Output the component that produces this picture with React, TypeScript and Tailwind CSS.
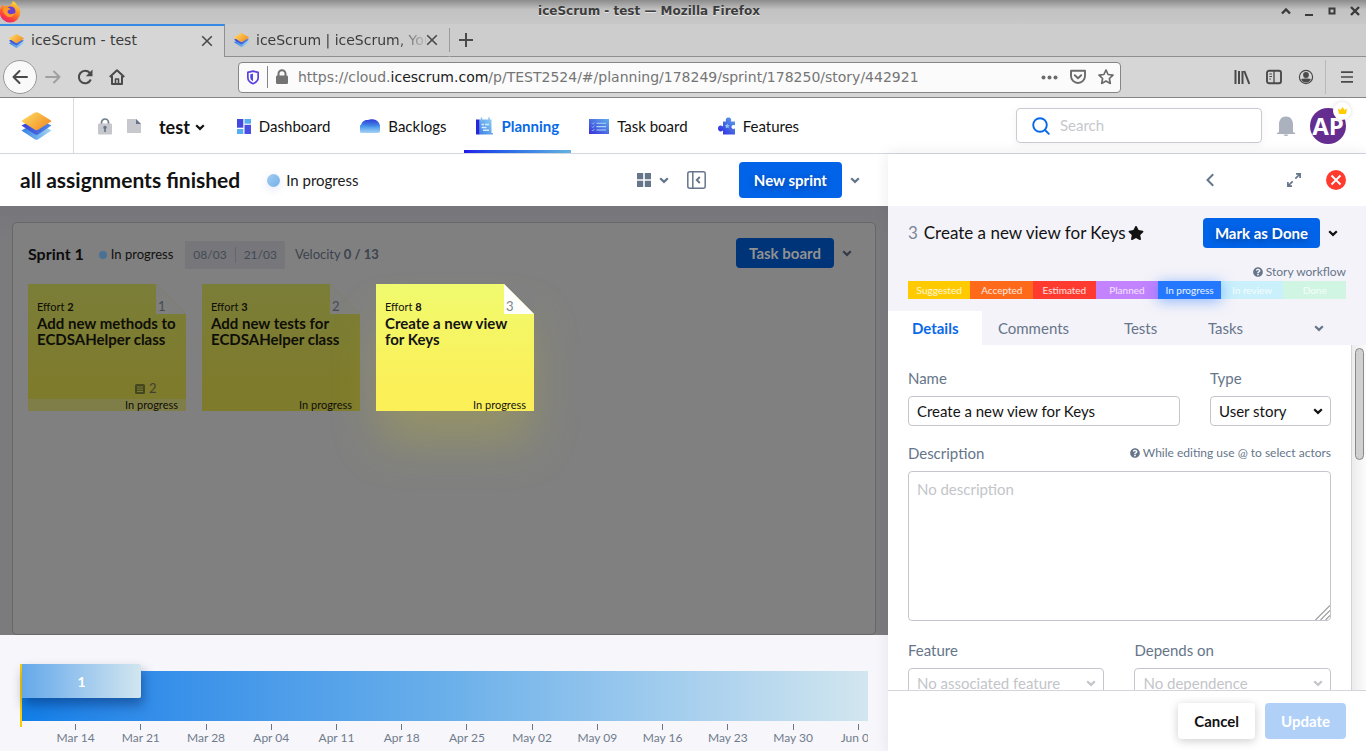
import type { ReactNode } from "react";
import { FaStar, FaQuestionCircle } from "react-icons/fa";

type IconProps = { className?: string };

function Chevron({ className = "" }: IconProps) {
  return (
    <svg viewBox="0 0 10 7" className={`h-[7px] w-[10px] shrink-0 ${className}`} fill="none" stroke="currentColor" strokeWidth="2.2">
      <path d="M1.2 1.2 5 4.9 8.8 1.2" />
    </svg>
  );
}

function IceScrumLogo({ className = "", id }: IconProps & { id: string }) {
  return (
    <svg viewBox="0 0 30 28" className={className}>
      <defs>
        <linearGradient id={`${id}-top`} x1="0" y1="0.2" x2="1" y2="0.8">
          <stop offset="0" stopColor="#fdd95c" />
          <stop offset="1" stopColor="#f28a26" />
        </linearGradient>
        <linearGradient id={`${id}-mid`} x1="0" y1="0" x2="1" y2="0">
          <stop offset="0" stopColor="#3b3fd8" />
          <stop offset="1" stopColor="#4e8be6" />
        </linearGradient>
        <linearGradient id={`${id}-low`} x1="0" y1="0" x2="1" y2="0">
          <stop offset="0" stopColor="#2f80e0" />
          <stop offset="1" stopColor="#a9d8f4" />
        </linearGradient>
      </defs>
      <path d="M0 18.4 L15 10 L30 18.4 L16.4 27.4 Q15 28.3 13.600 27.400Z" fill={`url(#${id}-low)`} />
      <path d="M0 13.400 L15 6 L30 13.400 L16.400 22.600 Q15 23.400 13.600 22.600Z" fill={`url(#${id}-mid)`} />
      <path d="M0.800 8.200 L13 .8 Q15 -.4 17 .8 L29.200 8.200 Q30.400 9 29.200 9.800 L17 17.600 Q15 18.800 13 17.600 L.8 9.800 Q-.4 9 .8 8.200Z" fill={`url(#${id}-top)`} />
    </svg>
  );
}

function FirefoxLogo() {
  return (
    <svg viewBox="0 0 22 22" className="-ml-px size-[22px]">
      <defs>
        <linearGradient id="fox" x1="0.8" y1="0" x2="0.3" y2="1">
          <stop offset="0" stopColor="#ffe03a" />
          <stop offset="0.45" stopColor="#ff8a1f" />
          <stop offset="0.8" stopColor="#fb3a45" />
          <stop offset="1" stopColor="#e5207a" />
        </linearGradient>
      </defs>
      <path d="M14 0c2 1 3.500 3 4 4.500 2 1.500 3.500 4 3.300 7A10 10 0 0 1 11 21.500 10.200 10.200 0 0 1 .8 11.500C.7 8.500 1.600 5.500 3.800 3.500c.2 1 .6 1.500 1 2C7 4.500 8.500 4.400 10 5c1.500-.4 3-2.500 4-5z" fill="url(#fox)" />
      <circle cx="11.600" cy="10.200" r="4.800" fill="#6a3fd6" />
      <path d="M4 8c2-2 5-2.300 8 .2-2 .2-3 .8-3.400 2-.3 1.400.8 2.600 2.600 3 2 .4 3.600-.6 4.400-1.400-.4 3-2.600 4.400-5 4.200C6.600 15.600 4 12 4 8z" fill="#ff9a24" />
    </svg>
  );
}

function ShieldIcon() {
  return (
    <svg viewBox="0 0 14 16" className="h-[15px] w-[14px]" fill="none">
      <path d="M7 1.200 12.500 2.500V8c0 3.200-2.500 5.400-5.500 6.600C4 13.400 1.500 11.200 1.500 8V2.500z" stroke="#5c3fe0" strokeWidth="1.800" strokeLinejoin="round" />
      <path d="M7 4v8c-1.600-.8-2.900-2-2.900-4.200V4.600z" fill="#4a4ae6" />
    </svg>
  );
}

function PadlockIcon() {
  return (
    <svg viewBox="0 0 14 16" className="h-4 w-[14px]">
      <path d="M3.500 7V4.800a3.500 3.500 0 0 1 7 0V7" fill="none" stroke="#737373" strokeWidth="2" />
      <rect x="1" y="6.500" width="12" height="8.500" rx="1.200" fill="#737373" />
    </svg>
  );
}

function LockGrey() {
  return (
    <svg viewBox="0 0 14 17" className="h-[17px] w-[14px]">
      <path d="M3.500 7V4.500a3.500 3.500 0 0 1 7 0V7" fill="none" stroke="#6f7b8b" strokeWidth="1.700" />
      <rect y="5.500" width="14" height="11" rx="1" fill="#c6c6cd" />
      <circle cx="7" cy="9.500" r="1.700" fill="#66758a" />
      <path d="M6.200 10h1.600v4H6.200z" fill="#66758a" />
    </svg>
  );
}

function FileGrey() {
  return (
    <svg viewBox="0 0 14 14" className="size-[14px]">
      <path d="M0 0h9l5 5v9H0z" fill="#c8c8cf" />
      <path d="M9 0v5h5z" fill="#66758a" />
    </svg>
  );
}

function DashboardIcon() {
  return (
    <svg viewBox="0 0 14 15" className="h-[15px] w-[14px]">
      <path d="M0 0h6.300v8.700H0z" fill="#4348e0" />
      <path d="M7.500 5.800H14V15H7.500z" fill="#4a4fe4" />
      <path d="M7.500 0H14v4.700H7.500z" fill="#56aef0" />
      <path d="M0 10h6.300v5H0z" fill="#56aef0" />
    </svg>
  );
}

function BacklogsIcon() {
  return (
    <svg viewBox="0 0 20 14" className="h-[14px] w-5">
      <defs>
        <linearGradient id="bk-a" x1="0" y1="0" x2="0" y2="1">
          <stop offset="0" stopColor="#2f3bd8" />
          <stop offset="1" stopColor="#4aa0ea" />
        </linearGradient>
        <linearGradient id="bk-b" x1="0" y1="0" x2="0" y2="1">
          <stop offset="0" stopColor="#2e86ea" />
          <stop offset="1" stopColor="#a8d4f4" />
        </linearGradient>
      </defs>
      <path d="M1 8C1 3 4 1 7 1c1.500 0 2-.8 4-.8C15.500.2 19.500 2 20 7v2H1z" fill="url(#bk-a)" />
      <path d="M0 6.500C2 4.500 4.500 6 7 7c4 1.500 8 1 13-1v6q0 2-2 2H1.500Q0 14 0 12.500z" fill="url(#bk-b)" />
    </svg>
  );
}

function PlanningIcon() {
  return (
    <svg viewBox="0 0 17 18" className="h-[18px] w-[17px]">
      <defs>
        <linearGradient id="pl-a" x1="0" y1="1" x2="1" y2="0">
          <stop offset="0" stopColor="#3f7fe6" />
          <stop offset="1" stopColor="#8fd2f2" />
        </linearGradient>
      </defs>
      <path d="M3 2.500h12.500V16H17v1.500H3z" fill="url(#pl-a)" />
      <path d="M0 2.500h3.200v15H0z" fill="#2a26d8" />
      <path d="M5.500.5v4M13 .5v4" stroke="#7fbdf0" strokeWidth="1.400" />
      <path d="M5.500 7.500H8M9 7.500h4M5.500 10.500h5M7 13.300h6" stroke="#d6ecfb" strokeWidth="1.500" />
    </svg>
  );
}

function TaskBoardIcon() {
  return (
    <svg viewBox="0 0 20 15" className="h-[15px] w-5">
      <defs>
        <linearGradient id="tb-a" x1="0" y1="1" x2="1" y2="0">
          <stop offset="0" stopColor="#3a2fdc" />
          <stop offset="1" stopColor="#5fb0ea" />
        </linearGradient>
      </defs>
      <rect width="20" height="15" fill="url(#tb-a)" />
      <path d="M7.500 4.200H17M7.500 7.600H17M7.500 11H17" stroke="#a9d8f5" strokeWidth="1.100" />
      <path d="m2.800 4.200 1 1 1.600-2M2.800 7.600l1 1 1.600-2M2.800 11l1 1 1.600-2" fill="none" stroke="#8fc4f2" strokeWidth=".9" />
    </svg>
  );
}

function FeaturesIcon() {
  return (
    <svg viewBox="0 0 17 18" className="h-[18px] w-[17px]">
      <defs>
        <linearGradient id="ft-a" x1="0" y1="1" x2="1" y2="0">
          <stop offset="0" stopColor="#2a1fe0" />
          <stop offset="1" stopColor="#5fa8e8" />
        </linearGradient>
      </defs>
      <path d="M5 4.500h3.200C7 2.500 8.500.5 10.500.5s3.500 2 2.300 4H17v4c-2-1-3.500 0-3.500 1.500s1.500 2.500 3.500 1.500v6H5v-4c-2.500 2-5 .5-5-2s2.500-4 5-2z" fill="url(#ft-a)" />
      <path d="m9.200 6.500.8 1.600 1.700.2-1.200 1.200.3 1.700-1.600-.8-1.500.8.3-1.700-1.300-1.200 1.700-.2z" fill="#8cc4f0" />
    </svg>
  );
}

function NavItem({ icon, label, active = false }: { icon: ReactNode; label: string; active?: boolean }) {
  return (
    <a
      href={`#${label.replace(" ", "").toLowerCase()}`}
      aria-current={active ? "page" : undefined}
      className={`relative flex h-full items-center gap-2 px-3 pt-px text-[15px] ${active ? "font-bold text-[#0869e8]" : "text-[#121212]"}`}
    >
      {icon}
      <span>{label}</span>
      {active && <span className="absolute inset-x-0 bottom-0 h-[3px] bg-linear-to-r from-[#2512e8] to-[#66b2de]" />}
    </a>
  );
}

function BrowserTab({ id, title, selected = false }: { id: string; title: string; selected?: boolean }) {
  return (
    <div
      className={`flex h-full w-[225px] items-center border-r pl-[9px] pr-[11px] ${
        selected ? "border-t-2 border-r-[#8f8f8f] border-t-[#3689e6] bg-[#d6d6d6] pb-[2px]" : "border-b border-b-[#8f8f8f] border-r-transparent"
      }`}
    >
      <IceScrumLogo id={id} className="mr-[7px] h-[14px] w-[15px]" />
      <span
        className={`flex-1 overflow-hidden whitespace-nowrap text-[14px] text-[#3b3b3b] ${
          selected ? "" : "[mask-image:linear-gradient(to_right,black_82%,transparent_102%)]"
        }`}
      >
        {title}
      </span>
      <button aria-label={`Close ${title}`} className="text-[#4a4a4a]">
        <svg viewBox="0 0 12 12" className="size-3" stroke="currentColor" strokeWidth="1.600">
          <path d="M1.200 1.200 10.800 10.800M10.800 1.200 1.200 10.800" />
        </svg>
      </button>
    </div>
  );
}

function BrowserChrome() {
  return (
    <div className="shrink-0 font-['DejaVu_Sans',sans-serif]">
      <div className="relative flex h-6 items-center justify-between bg-linear-to-b from-[#8c8c8c] via-[#c2c2c2] via-40% to-[#c8c8c8] pr-[6px]">
        <FirefoxLogo />
        <div className="absolute inset-x-0 -translate-x-[34px] pb-[2px] text-center text-[12px] font-bold text-[#3c3c3c] [text-shadow:0_1px_0_#e6e6e6]">
          iceScrum - test — Mozilla Firefox
        </div>
        <div className="relative flex items-center gap-[13px] pb-[2px] text-[#3a3a3a]">
          <button aria-label="Roll up">
            <svg viewBox="0 0 10 10" className="size-[10px]" fill="none" stroke="currentColor" strokeWidth="2.400"><path d="M1 7.500 5 3.500 9 7.500" /></svg>
          </button>
          <button aria-label="Minimize">
            <svg viewBox="0 0 10 10" className="size-[10px]"><path d="M1 8h8v2H1z" fill="currentColor" /></svg>
          </button>
          <button aria-label="Maximize">
            <svg viewBox="0 0 10 10" className="size-[10px]" fill="none" stroke="currentColor" strokeWidth="2"><path d="M2.500 2.500h5v5h-5z" /></svg>
          </button>
          <button aria-label="Close window">
            <svg viewBox="0 0 10 10" className="size-[10px]" stroke="currentColor" strokeWidth="2.400"><path d="M1 1 9 9M9 1 1 9" /></svg>
          </button>
        </div>
      </div>

      <div className="flex h-[33px] bg-[#cdcdcd]">
        <BrowserTab id="tab-a" title="iceScrum - test" selected />
        <BrowserTab id="tab-b" title="iceScrum | iceScrum, Your Agile" />
        <div className="flex flex-1 items-center border-b border-[#8f8f8f]">
          <span className="-ml-px h-6 w-px bg-[#9c9c9c]" />
          <button aria-label="New tab" className="ml-[9px] text-[#4a4a4a]">
            <svg viewBox="0 0 14 14" className="size-[14px]" stroke="currentColor" strokeWidth="2"><path d="M7 0v14M0 7h14" /></svg>
          </button>
        </div>
      </div>

      <div className="flex h-[41px] items-center border-b border-[#858585] bg-[#d6d6d6] pl-[3px] pr-[13px] text-[#4a4a4a]">
        <button aria-label="Back" className="grid size-[34px] place-items-center rounded-full border border-[#999] bg-[#f9f9f9]">
          <svg viewBox="0 0 16 16" className="size-4" fill="none" stroke="currentColor" strokeWidth="2" strokeLinecap="round" strokeLinejoin="round"><path d="M15 8H1.500M7.500 2 1.500 8l6 6" /></svg>
        </button>
        <button aria-label="Forward" className="ml-2 text-[#a0a0a0]">
          <svg viewBox="0 0 16 16" className="size-4" fill="none" stroke="currentColor" strokeWidth="2" strokeLinecap="round" strokeLinejoin="round"><path d="M1 8h13.500M9 2.500 14.500 8 9 13.500" /></svg>
        </button>
        <button aria-label="Reload" className="ml-4">
          <svg viewBox="0 0 16 16" className="size-4" fill="none" stroke="currentColor" strokeWidth="2"><path d="M13.800 10.500A6.200 6.200 0 1 1 12.800 4" /><path d="M15.500.5v6.800H8.800z" fill="currentColor" stroke="none" /></svg>
        </button>
        <button aria-label="Home" className="ml-4">
          <svg viewBox="0 0 16 16" className="size-4" fill="none" stroke="currentColor" strokeWidth="2" strokeLinejoin="round"><path d="M.8 8 8 1.200 15.200 8M3 7v8h10V7" /><path d="M6.500 15v-5h3v5" strokeWidth="1.600" /></svg>
        </button>
        <div className="ml-[113px] flex h-[31px] min-w-0 flex-1 items-center rounded-[4px] border border-[#858585] bg-[#fbfbfb] pl-[7px] pr-[6px]">
          <ShieldIcon />
          <span className="ml-[7px] mr-[7px] h-[22px] w-px bg-[#858585]" />
          <PadlockIcon />
          <div className="ml-[9px] flex-1 overflow-hidden whitespace-nowrap text-[14px] text-[#757575]">
            https://cloud.<span className="text-[#1c1c1c]">icescrum.com</span>/p/TEST2524/#/planning/178249/sprint/178250/story/442921
          </div>
          <div className="flex items-center gap-3 text-[#6b6b6b]">
            <button aria-label="Page actions">
              <svg viewBox="0 0 17 5" className="h-[5px] w-[17px]" fill="currentColor"><circle cx="2.500" cy="2.500" r="2" /><circle cx="8.500" cy="2.500" r="2" /><circle cx="14.500" cy="2.500" r="2" /></svg>
            </button>
            <button aria-label="Save to Pocket">
              <svg viewBox="0 0 16 16" className="size-4" fill="none" stroke="currentColor" strokeWidth="1.900" strokeLinecap="round" strokeLinejoin="round"><path d="M1 1.800h14V7A7 7 0 0 1 1 7z" /><path d="m4.800 6.200 3.200 3 3.200-3" /></svg>
            </button>
            <button aria-label="Bookmark this page">
              <svg viewBox="0 0 16 16" className="size-4" fill="none" stroke="currentColor" strokeWidth="1.700" strokeLinejoin="round"><path d="m8 1 2.100 4.500 4.900.6-3.600 3.400.9 4.900L8 12l-4.300 2.400.9-4.900L1 6.100l4.900-.6z" /></svg>
            </button>
          </div>
        </div>
        <div className="ml-[113px] flex items-center gap-4">
          <button aria-label="Library">
            <svg viewBox="0 0 16 16" className="size-4" stroke="currentColor" strokeWidth="2"><path d="M1.500 1v14M5 2v13M8.500 2v13M10.300 2l5 13" /></svg>
          </button>
          <button aria-label="Sidebars">
            <svg viewBox="0 0 16 16" className="size-4" fill="none" stroke="currentColor" strokeWidth="1.900"><rect x="1" y="1.800" width="14" height="12.400" rx="2" /><path d="M8 2v12" strokeWidth="1.300" /><path d="M3.300 5h2.700M3.300 7.500h2.700M3.300 10h1.700" strokeWidth="1" /></svg>
          </button>
          <button aria-label="Account">
            <svg viewBox="0 0 16 16" className="size-4"><circle cx="8" cy="8" r="6.600" fill="none" stroke="currentColor" strokeWidth="1.200" /><circle cx="8" cy="6" r="2.900" fill="currentColor" /><path d="M3.200 10.200c1.500-.8 8.100-.8 9.600 0A5.500 5.500 0 0 1 8 13.500a5.500 5.500 0 0 1-4.800-3.300z" fill="currentColor" /></svg>
          </button>
        </div>
        <span className="ml-[11px] mr-[15px] h-[34px] w-px bg-[#b9b9b9]" />
        <button aria-label="Open menu">
          <svg viewBox="0 0 12 12" className="size-3" stroke="currentColor" strokeWidth="1.700"><path d="M0 1.200h12M0 6h12M0 10.800h12" /></svg>
        </button>
      </div>
    </div>
  );
}

function AppHeader() {
  return (
    <header className="flex h-14 shrink-0 items-center border-b border-[#d3d7e0] bg-white pr-5">
      <a href="#home" aria-label="iceScrum home" className="grid h-full w-[74px] place-items-center border-r border-[#d6dae3]">
        <IceScrumLogo id="logo" className="h-7 w-[31px]" />
      </a>
      <div className="ml-6 flex items-center gap-[15px] pt-px">
        <LockGrey />
        <FileGrey />
      </div>
      <button className="ml-[18px] flex items-center gap-[5px] pt-[3px] text-[18px] font-bold text-[#121212]">
        test
        <Chevron />
      </button>
      <nav className="ml-[20px] flex h-full items-center gap-[6px]">
        <NavItem icon={<DashboardIcon />} label="Dashboard" />
        <NavItem icon={<BacklogsIcon />} label="Backlogs" />
        <NavItem icon={<PlanningIcon />} label="Planning" active />
        <NavItem icon={<TaskBoardIcon />} label="Task board" />
        <NavItem icon={<FeaturesIcon />} label="Features" />
      </nav>
      <label className="ml-auto flex h-[35px] w-[246px] items-center gap-[10px] rounded-[4px] border border-[#c9cbd2] pl-[15px] shadow-[0_2px_10px_rgba(0,0,0,0.05)]">
        <svg viewBox="0 0 18 18" className="size-[18px]" fill="none" stroke="#0869e8" strokeWidth="1.900" strokeLinecap="round"><circle cx="8" cy="8" r="6.800" /><path d="m13 13 3.800 3.800" /></svg>
        <input aria-label="Search" placeholder="Search" className="w-0 flex-1 text-[15px] outline-none placeholder:text-[#c6c8cc]" />
      </label>
      <button aria-label="Notifications" className="ml-[15px]">
        <svg viewBox="0 0 18 20" className="h-5 w-[18px]" fill="#abb2be"><path d="M2 16V8.500C2 4 4.500.5 9 .5s7 3.500 7 8V16l2 1v1H0v-1zM6.500 18.500h5Q11 20 9 20t-2.500-1.500z" /></svg>
      </button>
      <button aria-label="Account AP" className="relative ml-[15px] size-9">
        <span className="grid size-9 place-items-center overflow-hidden rounded-full bg-[#662d91] font-['Open_Sans',sans-serif] text-[24px] font-bold leading-none text-white">AP</span>
        <span className="absolute -right-[5px] -top-[6px] grid size-[18px] place-items-center rounded-full bg-white shadow-[0_0_4px_rgba(0,0,0,0.15)]">
          <svg viewBox="0 0 9 7" className="h-[7px] w-[9px]"><path d="M0 1.500 2.500 3 4.500 0l2 3L9 1.500 8 7H1z" fill="#ffcc00" /></svg>
        </span>
      </button>
    </header>
  );
}

function ViewToolbar() {
  return (
    <div className="flex h-[52px] shrink-0 items-center bg-white pl-5 pr-[28px]">
      <h1 className="text-[21px] font-bold text-[#121212]">all assignments finished</h1>
      <span className="ml-[27px] size-[13px] rounded-full bg-linear-to-br from-[#a3cdf0] to-[#74b0ea] shadow-[0_3px_8px_rgba(80,100,220,0.15)]" />
      <span className="ml-[6px] text-[15px] text-[#202020]">In progress</span>
      <div className="ml-auto flex items-center text-[#66758a]">
        <button aria-label="Display size" className="flex items-center gap-2">
          <svg viewBox="0 0 14 14" className="size-[14px]" fill="currentColor"><path d="M0 0h6.200v6.200H0zM7.800 0H14v6.200H7.800zM0 7.800h6.200V14H0zM7.800 7.800H14V14H7.800z" /></svg>
          <Chevron />
        </button>
        <button aria-label="Toggle panel" className="ml-[18px]">
          <svg viewBox="0 0 19 18" className="h-[18px] w-[19px]" fill="none" stroke="currentColor" strokeWidth="1.500"><rect x=".8" y=".8" width="17.400" height="16.400" rx="2" /><path d="M5.800 1v16" /><path d="m12.800 6-3 3 3 3" strokeWidth="1.900" /></svg>
        </button>
        <button className="ml-[33px] h-9 rounded-[4px] bg-[#0063e8] px-[15px] text-[15px] font-bold text-white [text-shadow:0_2px_6px_rgba(0,0,0,0.35)]">New sprint</button>
        <button aria-label="More sprint actions" className="ml-2"><Chevron /></button>
      </div>
    </div>
  );
}

type Story = { id: number; effort: number; name: string; comments?: number; strip?: boolean; selected?: boolean };

const stories: Story[] = [
  { id: 1, effort: 2, name: "Add new methods to ECDSAHelper class", comments: 2, strip: true },
  { id: 2, effort: 3, name: "Add new tests for ECDSAHelper class" },
  { id: 3, effort: 8, name: "Create a new view for Keys", selected: true },
];

function StoryCard({ story }: { story: Story }) {
  const lit = story.selected;
  return (
    <article className={`h-[127px] w-[158px] ${lit ? "relative shadow-[0_34px_46px_-4px_rgba(185,180,60,0.36)]" : ""}`}>
      <div
        className={`relative flex h-full flex-col pl-[9px] [clip-path:polygon(0_0,128px_0,100%_30px,100%_100%,0_100%)] ${
          lit ? "bg-linear-to-b from-[#f0fa6e] to-[#fbf058] to-80% text-[#141414]" : "bg-linear-to-b from-[#7b7e38] to-[#7e7b2c] to-80% text-[#0e0e08]"
        }`}
      >
        <span className={`absolute right-0 top-0 size-[30px] pl-[2px] pt-[14px] text-[13px] leading-[16px] ${lit ? "bg-[#fefefa] text-[#7a8492]" : "bg-[#7f7f7d] text-[#454b54]"}`}>{story.id}</span>
        <div className="pt-[16px] text-[11px] leading-[14px]">Effort <b>{story.effort}</b></div>
        <h3 className="pr-2 pt-px text-[15px] font-bold leading-[16px]">{story.name}</h3>
        <div className="mt-auto flex h-5 items-center gap-[4px] pl-[98px] text-[13px] text-[#3e4036]">
          {story.comments && (
            <>
              <svg viewBox="0 0 10 10" className="size-[10px]"><rect width="10" height="10" rx="1.500" fill="#45471f" /><path d="M2 3h6M2 5.200h6M2 7.400h6" stroke="#85873c" strokeWidth=".9" /></svg>
              {story.comments}
            </>
          )}
        </div>
        <div className={`-ml-[9px] h-3 pr-2 text-right text-[11px] leading-[12px] ${story.strip ? "bg-[#807e48]" : ""}`}>In progress</div>
      </div>
    </article>
  );
}

function Board() {
  return (
    <main className="flex min-h-0 flex-1 flex-col bg-linear-to-b from-[#76767b] to-[#7b7b7e] to-8% px-3 pt-4">
      <section className="flex-1 rounded-[5px] border border-[#676769] bg-[#808080] px-[15px] pt-[15px]">
        <div className="flex h-[30px] items-center">
          <div className="flex items-center pt-[3px] text-[12px]">
            <h2 className="pb-[2px] text-[16px] font-bold text-[#0c0c0c]">Sprint 1</h2>
            <span className="ml-[15px] size-2 rounded-full bg-[#4a7195]" />
            <span className="ml-1 text-[13px] text-[#101010]">In progress</span>
            <div className="ml-[12px] flex h-7 items-center bg-[#76767b] px-2 text-[#434a55]">
              08/03
              <span className="mx-2 h-4 w-px bg-[#66666c]" />
              21/03
            </div>
            <span className="ml-[10px] text-[13px] text-[#3c434e]">Velocity <b>0 / 13</b></span>
          </div>
          <button className="ml-auto h-[30px] rounded-[4px] bg-[#003478] px-[13px] text-[15px] font-bold text-[#919191]">Task board</button>
          <button aria-label="More actions for Sprint 1" className="ml-2 mr-2 text-[#343b46]"><Chevron /></button>
        </div>
        <div className="mt-4 flex gap-4">
          {stories.map((s) => (
            <StoryCard key={s.id} story={s} />
          ))}
        </div>
      </section>
    </main>
  );
}

const weeks = ["Mar 14", "Mar 21", "Mar 28", "Apr 04", "Apr 11", "Apr 18", "Apr 25", "May 02", "May 09", "May 16", "May 23", "May 30", "Jun 06"];

function Timeline() {
  return (
    <footer className="h-[116px] shrink-0 bg-[#f7f6fb] px-5 pt-[36px]">
      <div className="relative h-[50px] bg-linear-to-r from-[#0f7ee8] via-[#69afea] via-50% to-[#d2e6ef]">
        <span className="absolute -bottom-[6px] -top-[7px] left-0 w-[2px] bg-[#ffcc00]" />
        <button className="absolute -top-[7px] left-[2px] flex h-[34px] w-[119px] items-center justify-center rounded-r-[2px] bg-linear-to-r from-[#64a8ea] to-[#d2e6ef] text-[14px] font-bold text-white shadow-[2px_7px_12px_rgba(0,30,90,0.45)]">1</button>
      </div>
      <div className="overflow-hidden">
        <div className="ml-[23px] grid w-full grid-cols-13 pt-[3px]">
          {weeks.map((w) => (
            <div key={w} className="flex flex-col items-center whitespace-nowrap text-[12px] leading-[16px] text-[#6f7c8c]">
              <span className="h-[6px] w-px bg-[#66758a]" />
              {w}
            </div>
          ))}
        </div>
      </div>
    </footer>
  );
}

const steps = [
  { name: "Suggested", style: "bg-[#ffcb00] text-white/85" },
  { name: "Accepted", style: "bg-[#ff6a1a] text-white/85" },
  { name: "Estimated", style: "bg-[#ff3b30] text-white/85" },
  { name: "Planned", style: "bg-[#c383ff] text-white/80" },
  { name: "In progress", style: "relative bg-[#2478ff] text-white/90 shadow-[0_2px_14px_rgba(36,120,255,0.5)]" },
  { name: "In review", style: "bg-[#c9f0fb] text-white/80" },
  { name: "Done", style: "bg-[#d0f5e3] text-white/80" },
];

function Field({ id, label, hint, children }: { id: string; label: string; hint?: string; children: ReactNode }) {
  return (
    <div className="flex flex-col">
      <div className="flex h-[18px] items-center justify-between">
        <label htmlFor={id} className="text-[15px] text-[#66758a]">{label}</label>
        {hint && (
          <span className="flex items-center gap-[3px] text-[12px] text-[#66758a]">
            <FaQuestionCircle className="size-[10px]" />
            {hint}
          </span>
        )}
      </div>
      <div className="relative mt-[9px] flex">{children}</div>
    </div>
  );
}

function SelectBox({ id, value, muted = false }: { id: string; value: string; muted?: boolean }) {
  return (
    <>
      <select id={id} defaultValue={value} className={`h-[30px] w-full appearance-none rounded-[4px] border border-[#c5c6cb] bg-white pl-2 text-[15px] ${muted ? "text-[#c3c5c9]" : "text-[#141414]"}`}>
        <option>{value}</option>
      </select>
      <Chevron className={`pointer-events-none absolute right-[8px] top-[12px] ${muted ? "text-[#c3c5c9]" : "text-[#141414]"}`} />
    </>
  );
}

function StoryPanel() {
  return (
    <aside className="relative flex w-[35%] shrink-0 flex-col bg-white shadow-[0_0_14px_rgba(30,30,80,0.09)]">
      <div className="flex h-[52px] shrink-0 items-center justify-end pr-5 text-[#66758a]">
        <button aria-label="Previous story">
          <svg viewBox="0 0 8 14" className="h-[14px] w-2" fill="none" stroke="currentColor" strokeWidth="2"><path d="M7.200 1.200 1.500 7l5.700 5.800" /></svg>
        </button>
        <button aria-label="Expand" className="ml-[73px]">
          <svg viewBox="0 0 14 14" className="size-[14px]" fill="none" stroke="currentColor" strokeWidth="1.700"><path d="M9 .9h4.100V5M13 1 8.300 5.700M5 13.100H.9V9M1 13l4.700-4.700" /></svg>
        </button>
        <button aria-label="Close story" className="ml-[25px]">
          <svg viewBox="0 0 20 20" className="size-5"><circle cx="10" cy="10" r="10" fill="#ff3b30" /><path d="m5.500 5.500 9 9M14.500 5.500l-9 9" stroke="#fff" strokeWidth="1.800" /></svg>
        </button>
      </div>

      <div className="shrink-0 bg-[#f4f3f9]">
        <div className="flex items-center pl-5 pr-[28px] pt-3">
          <h2 className="flex items-center whitespace-nowrap text-[17px] text-[#121212]">
            <span className="mr-[6px] text-[#7b8797]">3</span>
            Create a new view for Keys
            <FaStar className="ml-[2px] size-4" />
          </h2>
          <button className="ml-auto h-[30px] rounded-[4px] bg-[#0063e8] px-3 text-[15px] font-bold text-white [text-shadow:0_2px_6px_rgba(0,0,0,0.35)]">Mark as Done</button>
          <button aria-label="More story actions" className="ml-2 text-[#121212]"><Chevron /></button>
        </div>
        <div className="flex items-center justify-end gap-[3px] pr-5 pt-[15px] text-[12px] leading-[18px] text-[#66758a]">
          <FaQuestionCircle className="size-[10px]" />
          Story workflow
        </div>
        <ol className="mx-5 grid h-[18px] grid-cols-7 text-center text-[10px] leading-[18px]">
          {steps.map((s) => (
            <li key={s.name} className={s.style}>{s.name}</li>
          ))}
        </ol>
        <div role="tablist" className="mt-3 flex h-[34px] items-center pr-[42px] text-[15px] text-[#66758a]">
          <button role="tab" aria-selected="true" className="h-full w-[94px] bg-white pl-6 text-left font-bold text-[#0869e8]">Details</button>
          <button role="tab" aria-selected="false" className="h-full w-[126px] pl-4 text-left">Comments</button>
          <button role="tab" aria-selected="false" className="h-full w-[84px] pl-4 text-left">Tests</button>
          <button role="tab" aria-selected="false" className="h-full w-[84px] pl-4 text-left">Tasks</button>
          <button aria-label="More tabs" className="ml-auto"><Chevron /></button>
        </div>
      </div>

      <div className="flex min-h-0 flex-1 overflow-hidden">
        <form id="story-form" className="flex flex-1 flex-col gap-[18px] pl-5 pr-5 pt-6">
          <div className="grid grid-cols-[1fr_121px] gap-[30px]">
            <Field id="name" label="Name">
              <input id="name" defaultValue="Create a new view for Keys" className="h-[30px] w-full rounded-[4px] border border-[#c5c6cb] px-2 text-[15px] text-[#141414]" />
            </Field>
            <Field id="type" label="Type">
              <SelectBox id="type" value="User story" />
            </Field>
          </div>
          <Field id="description" label="Description" hint="While editing use @ to select actors">
            <textarea id="description" placeholder="No description" className="h-[150px] w-full resize-none rounded-[4px] border border-[#c5c6cb] px-2 py-[6px] text-[15px] placeholder:text-[#c3c5c9]" />
            <svg viewBox="0 0 15 15" className="absolute bottom-px right-px size-[15px]" stroke="#9a9a9a" strokeWidth="1.100"><path d="M.5 15 15 .5M5.500 15 15 5.500M10.500 15 15 10.500" /></svg>
          </Field>
          <div className="mt-[2px] grid grid-cols-2 gap-[30px]">
            <Field id="feature" label="Feature">
              <SelectBox id="feature" value="No associated feature" muted />
            </Field>
            <Field id="depends" label="Depends on">
              <SelectBox id="depends" value="No dependence" muted />
            </Field>
          </div>
        </form>
        <div className="flex w-[15px] justify-center border-l border-[#d4d4d4] bg-linear-to-r from-[#ececec] to-[#fcfcfc] pt-[3px]">
          <span className="h-[112px] w-[9px] rounded-full border border-[#8a8a8a] bg-[#d0d0d0]" />
        </div>
      </div>

      <div className="flex h-[61px] shrink-0 items-center justify-end gap-[10px] border-t border-[#d3d4dc] bg-white pr-5">
        <button className="h-9 rounded-[4px] bg-white px-4 text-[15px] font-bold text-[#121212] shadow-[0_2px_10px_rgba(0,0,0,0.2)]">Cancel</button>
        <button form="story-form" disabled className="h-9 rounded-[4px] bg-[#b0d0f8] px-4 text-[15px] font-bold text-white">Update</button>
      </div>
    </aside>
  );
}

export default function App() {
  return (
    <div className="flex h-screen flex-col overflow-hidden bg-white font-[Lato,sans-serif]">
      <BrowserChrome />
      <AppHeader />
      <div className="flex min-h-0 flex-1">
        <div className="flex min-w-0 flex-1 flex-col">
          <ViewToolbar />
          <Board />
          <Timeline />
        </div>
        <StoryPanel />
      </div>
    </div>
  );
}
